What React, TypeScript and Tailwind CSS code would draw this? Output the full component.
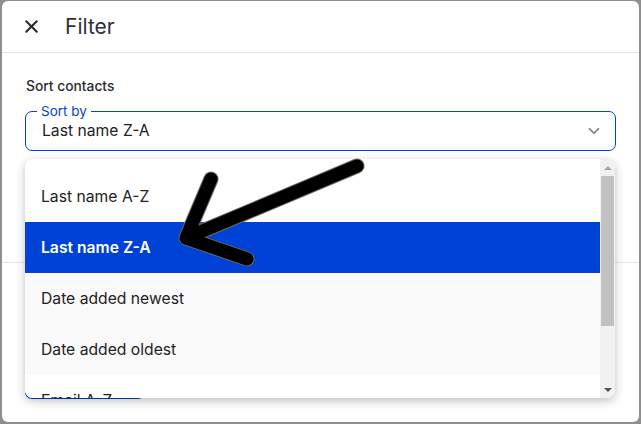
import { X, ChevronDown } from 'lucide-react'

const options = [
  { label: 'Last name A-Z', bg: 'bg-white' },
  { label: 'Last name Z-A', bg: 'bg-[#0041d6]', selected: true },
  { label: 'Date added newest', bg: 'bg-[#fafafa]' },
  { label: 'Date added oldest', bg: 'bg-[#fafafa]' },
  { label: 'Email A-Z', bg: 'bg-white' },
]

function Arrow() {
  // annotation drawn over the screenshot
  return (
    <svg className="pointer-events-none absolute inset-0 z-30" width="641" height="424" viewBox="0 0 641 424">
      <g fill="none" strokeLinecap="round" strokeLinejoin="round">
        <path d="M357 166 L186 238 M211 179 L186 238 L247 259" stroke="#6b6b5a" strokeWidth="15" />
        <path d="M357 166 L186 238 M211 179 L186 238 L247 259" stroke="#000" strokeWidth="13" />
      </g>
    </svg>
  )
}

export default function App() {
  return (
    <div
      className="relative h-[424px] w-[641px] overflow-hidden bg-[#8f8f8f] pt-px pr-[2px] pb-[2px] pl-[2px]"
      style={{ fontFamily: 'Inter, "Noto Sans", sans-serif' }}
    >
      <div className="relative h-full w-full rounded-[6px] bg-white">
        {/* header */}
        <div className="flex h-[52px] items-center border-b border-[#e3e3e3] pl-[19px]">
          <X className="h-[21px] w-[21px] text-[#24242c]" strokeWidth={2.3} />
          <span className="ml-[23px] text-[21px] leading-none text-[#2f2f38]">Filter</span>
        </div>

        <div className="px-[23px] pt-[25px]">
          <div className="pl-px text-[13.8px] font-medium leading-[16px] text-[#2b2b2b]">Sort contacts</div>

          <div className="relative mt-[17px] flex h-[40px] items-center rounded-[7px] border border-[#0041d6] pl-[16px] pr-[12px]">
            <span className="absolute -top-[9px] left-[11px] bg-white px-[4px] text-[13.5px] leading-[16px] text-[#0041d6]">
              Sort by
            </span>
            <span className="flex-1 text-[15.7px] text-[#222]">Last name Z-A</span>
            <ChevronDown className="h-[18px] w-[18px] text-[#7a7a80]" strokeWidth={2.2} />
          </div>
        </div>

        {/* section divider behind the menu */}
        <div className="mt-[111px] border-b border-[#e3e3e3]" />

        {/* button behind the menu */}
        <div className="absolute left-[23px] top-[355px] h-[43px] w-[120px] rounded-[7px] bg-[#0041d6]" />

        {/* dropdown menu */}
        <div className="absolute left-[23px] top-[158px] z-20 flex h-[239px] w-[590px] overflow-hidden rounded-[8px] bg-white shadow-[0_3px_10px_rgba(0,0,0,0.25)]">
          <div className="flex-1 overflow-hidden pt-[12px]">
            {options.map((o) => (
              <div
                key={o.label}
                className={`flex h-[51px] items-center pl-[16px] text-[15.7px] ${o.bg} ${
                  o.selected ? 'font-semibold text-white' : 'text-[#222]'
                }`}
              >
                {o.label}
              </div>
            ))}
          </div>
          <div className="flex w-[15px] flex-col bg-[#f1f1f1]">
            <div className="flex h-[17px] items-center justify-center">
              <div className="h-0 w-0 border-x-[4px] border-b-[4px] border-x-transparent border-b-[#a3a3a3]" />
            </div>
            <div className="mx-[1px] h-[150px] bg-[#c1c1c1]" />
            <div className="flex-1" />
            <div className="flex h-[17px] items-center justify-center">
              <div className="h-0 w-0 border-x-[4px] border-t-[4px] border-x-transparent border-t-[#505050]" />
            </div>
          </div>
        </div>
      </div>
      <Arrow />
    </div>
  )
}
